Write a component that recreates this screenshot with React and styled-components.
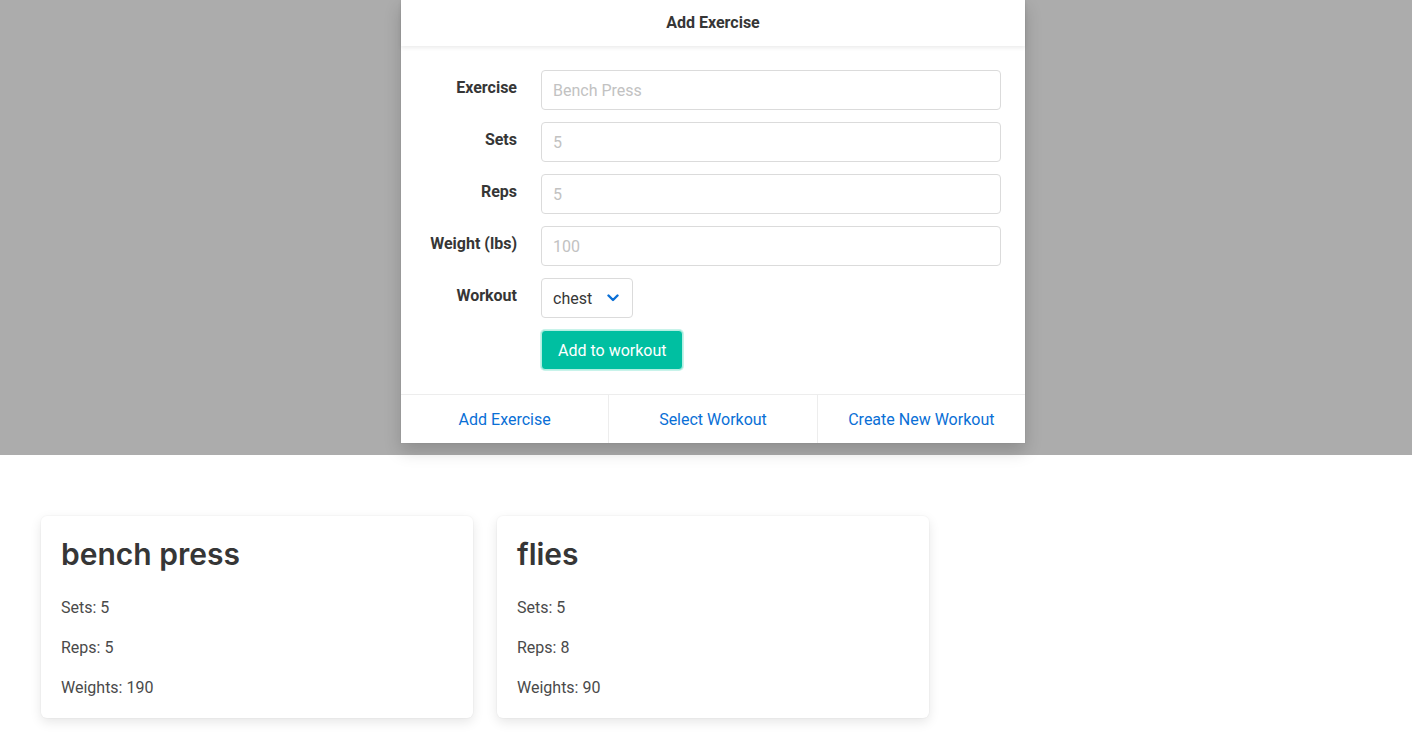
import React from "react";
import styled, { createGlobalStyle } from "styled-components";

const Global = createGlobalStyle`
  html, body { margin: 0; padding: 0; background: #fff; }
  body { font-family: Roboto, "Noto Sans", sans-serif; color: #363636; font-size: 16px; }
  * { box-sizing: border-box; }
`;

const Overlay = styled.div`
  background: #acacac;
  height: 455px;
  display: flex;
  justify-content: center;
  align-items: flex-start;
  padding-left: 14px;
`;

const ModalCard = styled.div`
  width: 624px;
  background: #fff;
  box-shadow: 0 8px 16px rgba(10, 10, 10, 0.18), 0 0 0 1px rgba(10,10,10,0.02);
  display: flex;
  flex-direction: column;
`;

const Head = styled.header`
  height: 46px;
  display: flex;
  align-items: center;
  justify-content: center;
  padding-bottom: 2px;
  font-weight: 700;
  font-size: 16px;
  color: #363636;
  box-shadow: 0 2px 4px rgba(10, 10, 10, 0.08);
  position: relative;
  z-index: 1;
`;

const Body = styled.section`
  padding: 24px 24px 24px;
  display: flex;
  flex-direction: column;
  gap: 12px;
`;

const Field = styled.div`
  display: flex;
  align-items: flex-start;
`;

const Label = styled.label`
  flex: 1 1 0;
  margin-right: 24px;
  text-align: right;
  font-weight: 700;
  font-size: 16px;
  color: #363636;
  padding-top: 8px;
  white-space: nowrap;
`;

const FieldBody = styled.div`
  flex: 5 1 0;
  display: flex;
`;

const Input = styled.input`
  width: 100%;
  height: 40px;
  border: 1px solid #dbdbdb;
  border-radius: 4px;
  padding: 0 11px;
  font-family: inherit;
  font-size: 16px;
  color: #363636;
  outline: none;
  &::placeholder { color: #c2c2c2; }
`;

const SelectBox = styled.div`
  height: 40px;
  width: 92px;
  border: 1px solid #dbdbdb;
  border-radius: 4px;
  display: flex;
  align-items: center;
  padding: 0 11px;
  gap: 15px;
  font-size: 16px;
  color: #363636;
`;

const Button = styled.button`
  height: 40px;
  padding: 0 16px;
  background: #00bfa1;
  color: #fff;
  border: 1px solid #b2efe2;
  border-radius: 4px;
  font-family: inherit;
  font-size: 16px;
  box-shadow: 0 0 0 1px #c8f3ea;
`;

const Foot = styled.footer`
  display: flex;
  border-top: 1px solid #ededed;
`;

const FootItem = styled.a`
  flex: 1 1 0;
  height: 48px;
  display: flex;
  align-items: center;
  justify-content: center;
  color: #0a6fd6;
  font-size: 16px;
  text-decoration: none;
  & + & { border-left: 1px solid #ededed; }
`;

const Cards = styled.div`
  display: flex;
  gap: 24px;
  padding: 61px 41px 30px;
`;

const Card = styled.div`
  width: 432px;
  background: #fff;
  border-radius: 6px;
  box-shadow: 0 4px 12px rgba(10, 10, 10, 0.1), 0 0 0 1px rgba(10, 10, 10, 0.02);
  padding: 20px 20px 10px;
`;

const CardTitle = styled.h2`
  margin: 0 0 16px;
  font-family: Inter, "Noto Sans", sans-serif;
  font-size: 30px;
  font-weight: 600;
  line-height: 36px;
  color: #363636;
`;

const CardLine = styled.p`
  margin: 0;
  font-size: 16px;
  line-height: 40px;
  color: #4a4a4a;
`;

const Chevron = () => (
  <svg width="12" height="8" viewBox="0 0 12 8">
    <path d="M1.5 1.5 L6 6 L10.5 1.5" fill="none" stroke="#0a6fd6" strokeWidth="2.4" strokeLinecap="round" strokeLinejoin="round" />
  </svg>
);

const fields = [
  { label: "Exercise", ph: "Bench Press" },
  { label: "Sets", ph: "5" },
  { label: "Reps", ph: "5" },
  { label: "Weight (lbs)", ph: "100" },
];

const exercises = [
  { name: "bench press", sets: 5, reps: 5, weight: 190 },
  { name: "flies", sets: 5, reps: 8, weight: 90 },
];

export default function App() {
  return (
    <>
      <Global />
      <Overlay>
        <ModalCard>
          <Head>Add Exercise</Head>
          <Body>
            {fields.map((f) => (
              <Field key={f.label}>
                <Label>{f.label}</Label>
                <FieldBody>
                  <Input placeholder={f.ph} />
                </FieldBody>
              </Field>
            ))}
            <Field>
              <Label>Workout</Label>
              <FieldBody>
                <SelectBox>
                  chest <Chevron />
                </SelectBox>
              </FieldBody>
            </Field>
            <Field>
              <Label />
              <FieldBody>
                <Button>Add to workout</Button>
              </FieldBody>
            </Field>
          </Body>
          <Foot>
            <FootItem>Add Exercise</FootItem>
            <FootItem>Select Workout</FootItem>
            <FootItem>Create New Workout</FootItem>
          </Foot>
        </ModalCard>
      </Overlay>
      <Cards>
        {exercises.map((e) => (
          <Card key={e.name}>
            <CardTitle>{e.name}</CardTitle>
            <CardLine>Sets: {e.sets}</CardLine>
            <CardLine>Reps: {e.reps}</CardLine>
            <CardLine>Weights: {e.weight}</CardLine>
          </Card>
        ))}
      </Cards>
    </>
  );
}
